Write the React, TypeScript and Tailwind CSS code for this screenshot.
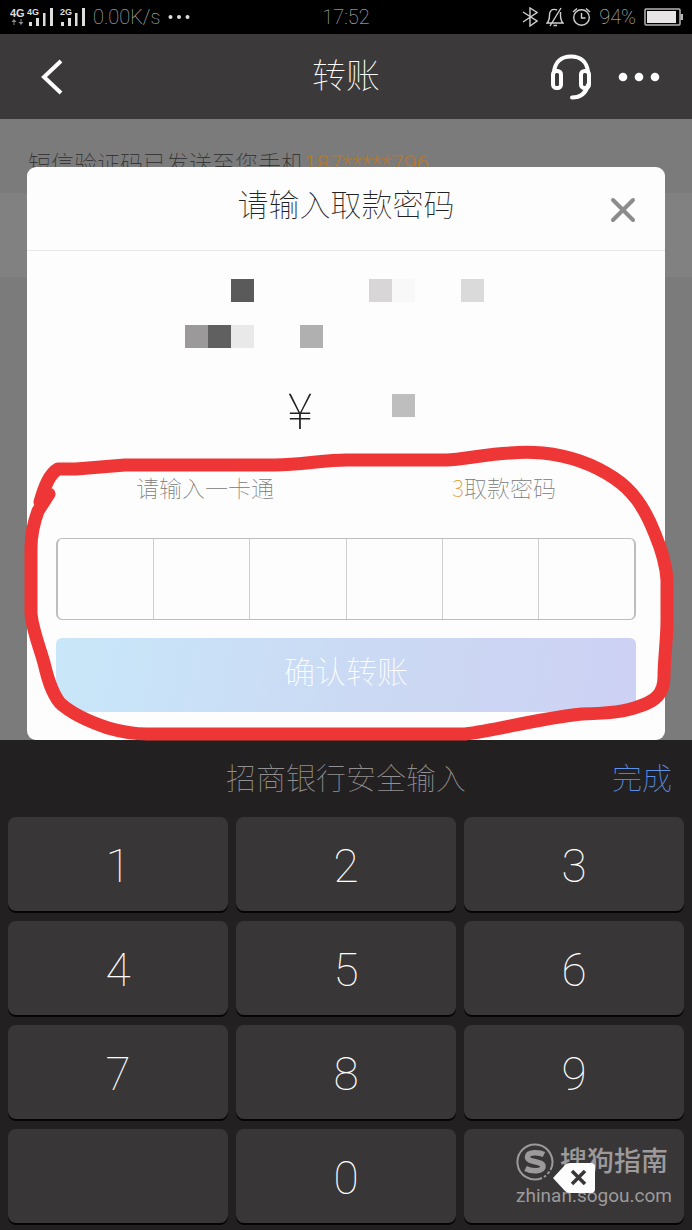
import { useState } from "react";

const tiles = [
  { id: "a1", cls: "col-start-3 row-start-1 bg-[#5a5a5a]" },
  { id: "a2", cls: "col-start-9 row-start-1 bg-[#d8d6d6]" },
  { id: "a3", cls: "col-start-10 row-start-1 bg-[#f8f8f8]" },
  { id: "a4", cls: "col-start-13 row-start-1 bg-[#dadada]" },
  { id: "b1", cls: "col-start-1 row-start-3 bg-[#9b9999]" },
  { id: "b2", cls: "col-start-2 row-start-3 bg-[#606060]" },
  { id: "b3", cls: "col-start-3 row-start-3 bg-[#e9e9e9]" },
  { id: "b4", cls: "col-start-6 row-start-3 bg-[#b0b0b0]" },
  { id: "c1", cls: "col-start-10 row-start-6 bg-[#bfbebe]" },
];

const keyClass =
  "flex h-[94px] items-center justify-center rounded-lg bg-[#393637] pt-1 font-[Roboto,sans-serif] text-[46px] leading-none text-white shadow-[0_2px_0_#060505]";

function StatusBar() {
  return (
    <div className="grid h-[34px] grid-cols-[1fr_auto_1fr] items-center bg-black font-[Roboto,sans-serif] text-[20px] leading-none text-[#c4c4c4]">
      <div className="flex items-center gap-2 pl-[10px]">
        <svg width="75" height="20" viewBox="0 0 75 20" fill="#dedede" aria-hidden="true">
          <g fontFamily="Liberation Sans, sans-serif" fontWeight="700">
            <text x="0" y="10" fontSize="11">4G</text>
            <text x="17" y="8" fontSize="9">4G</text>
            <text x="50" y="8" fontSize="9">2G</text>
          </g>
          <path d="M4 12l2.500 3h-2v3h-1v-3h-2zM11 18l2.500-3h-2v-3h-1v3h-2z" fill="#8a8a8a" />
          <path d="M19 15h3v4h-3zM26 11h3v8h-3zM33 6h2.500v13H33zM40 1h3v18h-3zM51 15h3v4h-3zM58 11h3v8h-3zM65 6h2.500v13H65zM72 1h3v18h-3z" />
        </svg>
        <span>0.00K/s</span>
        <svg width="22" height="6" viewBox="0 0 22 6" fill="#dedede" aria-hidden="true">
          <circle cx="2.500" cy="3" r="2" />
          <circle cx="11" cy="3" r="2" />
          <circle cx="19.500" cy="3" r="2" />
        </svg>
      </div>
      <span>17:52</span>
      <div className="flex items-center justify-end gap-2 pr-[9px]">
        <svg width="16" height="20" viewBox="0 0 16 20" fill="none" stroke="#cfcfcf" strokeWidth="1.400" aria-hidden="true">
          <path d="M1 5l14 9-7 5V1l7 4.500L1 15" />
        </svg>
        <svg width="18" height="20" viewBox="0 0 18 20" fill="none" stroke="#cfcfcf" strokeWidth="1.400" aria-hidden="true">
          <path d="M11 3C6 1 3.500 4 3.500 8c0 4-.5 6-2.500 8h16c-2-2-2.500-4-2.500-8V5M15 1L4 19M7.500 18.500h3.500" />
        </svg>
        <svg width="19" height="20" viewBox="0 0 19 20" fill="none" stroke="#cfcfcf" strokeWidth="1.400" aria-hidden="true">
          <circle cx="9.500" cy="10.500" r="7.800" />
          <path d="M9.500 6v5h4M1 5l4-3.500M18 5l-4-3.500" />
        </svg>
        <span>94%</span>
        <svg width="39" height="18" viewBox="0 0 39 18" aria-hidden="true">
          <rect x="1" y="1" width="35" height="16" rx="1" fill="none" stroke="#b5b5b5" strokeWidth="1.500" />
          <path d="M3 3h29v12H3z" fill="#e6e4e4" />
          <path d="M36.500 6H39v6h-2.500z" fill="#b5b5b5" />
        </svg>
      </div>
    </div>
  );
}

function Header() {
  return (
    <header className="grid h-[85px] grid-cols-[1fr_auto_1fr] items-center bg-[#3b393a] text-white">
      <button type="button" aria-label="返回" className="ml-[38px] justify-self-start">
        <svg width="26" height="38" viewBox="0 0 26 38" fill="none" stroke="currentColor" strokeWidth="4">
          <path d="M23 3L6 19l17 16" />
        </svg>
      </button>
      <h1 className="pb-1.5 text-[34px] leading-[44px]">转账</h1>
      <div className="flex items-center justify-end gap-[26px] pr-8">
        <button type="button" aria-label="客服">
          <svg width="42" height="46" viewBox="0 0 42 46" fill="none" stroke="currentColor" strokeWidth="4" strokeLinecap="round">
            <path d="M4 18C5 8 11 2.500 21 2.500S37 8 38 18" />
            <rect x="3" y="17" width="8" height="17" rx="3.500" />
            <rect x="31" y="17" width="8" height="17" rx="3.500" />
            <path d="M38 31c-2 8-7 12.500-16 12.500" />
          </svg>
        </button>
        <button type="button" aria-label="更多">
          <svg width="42" height="10" viewBox="0 0 42 10" fill="currentColor">
            <circle cx="5" cy="5" r="4.300" />
            <circle cx="21" cy="5" r="4.300" />
            <circle cx="37" cy="5" r="4.300" />
          </svg>
        </button>
      </div>
    </header>
  );
}

function Watermark() {
  return (
    <span className="absolute top-[14px] right-3 flex flex-col gap-1 font-[Roboto,'Noto_Sans_CJK_SC',sans-serif] text-[#9c9a9b]">
      <span className="flex items-center gap-1.5">
        <svg width="38" height="38" viewBox="0 0 38 38" fill="none" stroke="currentColor" aria-hidden="true">
          <path d="M26 35A17.500 17.500 0 1 1 34.500 27" strokeWidth="2" />
          <path d="M28 34l2-1.500M31.500 31l2-2.500" strokeWidth="2" />
          <path d="M28 11.500C23 9 11.500 8.500 11.500 14c0 6 15.500 3.500 15.500 9.500 0 5.500-11.500 5-17.500 2" strokeWidth="5.500" />
        </svg>
        <span className="text-[27px] leading-[38px] font-medium">搜狗指南</span>
      </span>
      <span className="text-[19px] leading-[22px] font-normal">zhinan.sogou.com</span>
    </span>
  );
}

export default function App() {
  const [code, setCode] = useState("");
  const press = (digit: string) => setCode((c) => (c + digit).slice(0, 6));

  return (
    <div className="bg-[#7b7b7b] font-['Noto_Sans_CJK_SC',sans-serif] font-thin">
      <StatusBar />
      <Header />

      <main className="relative pt-12">
        <div className="absolute inset-x-0 top-0">
          <p className="h-[74px] px-7 pt-[26px] text-[23px] leading-[34px] text-[#2c2c2c]">
            短信验证码已发送至您手机<span className="font-[Roboto,sans-serif] font-light text-[#b8772a]">187*****796</span>
          </p>
          <div className="h-[84px] bg-[#818181]" />
        </div>

        <section role="dialog" aria-labelledby="dialog-title" className="relative mx-[27px] rounded-[9px] bg-[#fdfdfd] pb-7">
          <div className="relative flex h-[84px] items-center justify-center border-b border-[#e6e6e6] pb-3">
            <h2 id="dialog-title" className="text-[31px] leading-[44px] text-[#222]">请输入取款密码</h2>
            <button type="button" aria-label="关闭" className="absolute top-[30px] right-[29px]">
              <svg width="26" height="26" viewBox="0 0 26 26" fill="none" stroke="#8c8c8c" strokeWidth="4" strokeLinecap="round">
                <path d="M3 3l20 20M23 3L3 23" />
              </svg>
            </button>
          </div>

          <div className="mt-7 grid grid-cols-[repeat(14,23px)] grid-rows-[repeat(7,23px)] justify-center">
            {tiles.map((t) => (
              <span key={t.id} className={t.cls} />
            ))}
            <span className="col-span-2 col-start-5 row-span-3 row-start-5 pt-1 text-center text-[50px] leading-[65px] text-[#222]">¥</span>
          </div>

          <div className="mt-[30px] flex h-[34px] items-center justify-between px-[109px] text-[23px] text-[#777]">
            <span>请输入一卡通</span>
            <span>
              <span className="text-[#e8951f]">3</span>取款密码
            </span>
          </div>

          <div className="mx-[29px] mt-[34px] flex h-[82px] divide-x divide-[#cfcfcf] overflow-hidden rounded-md border-x-2 border-y border-[#bdbdbd]">
            {[0, 1, 2, 3, 4, 5].map((i) => (
              <input
                key={i}
                type="password"
                readOnly
                value={code[i] ?? ""}
                aria-label={`密码第${i + 1}位`}
                className="w-0 min-w-0 flex-1 bg-transparent text-center text-3xl outline-none"
              />
            ))}
          </div>

          <div className="mx-[29px] mt-[18px] flex">
            <button
              type="button"
              className="h-[74px] flex-1 rounded-md bg-[linear-gradient(100deg,#c8e7f9,#cbdaf4_50%,#cdd1f3)] pb-3 text-[31px] leading-none text-white"
            >
              确认转账
            </button>
          </div>

          <svg
            className="pointer-events-none absolute inset-0 h-full w-full overflow-visible"
            viewBox="27 167 638 573"
            preserveAspectRatio="none"
            fill="none"
            stroke="#ef3636"
            strokeWidth="13"
            strokeLinecap="round"
            strokeLinejoin="round"
            aria-hidden="true"
          >
            <path d="M49 494L38 511C34 522 31 535 31 548V614C33 632 40 648 44 663C48 680 52 693 60 703C72 714 90 722 108 728C122 732 135 734 147 734H465C498 730 535 719 582 714C610 713 625 712 640 706C655 701 664 694 664 677C664 660 667 640 667 620V580C666 562 660 546 655 534C644 506 632 490 614 478C596 466 572 456 543 453C532 452 521 452 510 453C485 454 462 460 446 460H346C325 460 300 465 275 465H125L76 469H58C49 474 44 488 40 502" />
          </svg>
        </section>
      </main>

      <section aria-label="安全键盘" className="bg-[#232021] px-2 pb-2">
        <div className="grid h-[77px] grid-cols-[1fr_auto_1fr] items-center px-3 pb-1.5 text-[30px] leading-[44px] text-[#929091]">
          <span className="col-start-2">招商银行安全输入</span>
          <button type="button" className="justify-self-end text-[#5f92e6]">完成</button>
        </div>
        <div className="grid grid-cols-3 gap-x-2 gap-y-[10px]">
          {["1", "2", "3", "4", "5", "6", "7", "8", "9"].map((d) => (
            <button key={d} type="button" onClick={() => press(d)} className={keyClass}>
              {d}
            </button>
          ))}
          <span className={keyClass} />
          <button type="button" onClick={() => press("0")} className={keyClass}>0</button>
          <button type="button" aria-label="删除" onClick={() => setCode((c) => c.slice(0, -1))} className={`${keyClass} relative`}>
            <Watermark />
            <svg className="relative" width="44" height="32" viewBox="0 0 44 32">
              <path d="M1 16L13 3q2-2 5-2h21q4 0 4 4v22q0 4-4 4H18q-3 0-5-2z" fill="#fdfdfd" />
              <path d="M20 9l13 13M33 9L20 22" stroke="#393637" strokeWidth="3.500" fill="none" />
            </svg>
          </button>
        </div>
      </section>
    </div>
  );
}
